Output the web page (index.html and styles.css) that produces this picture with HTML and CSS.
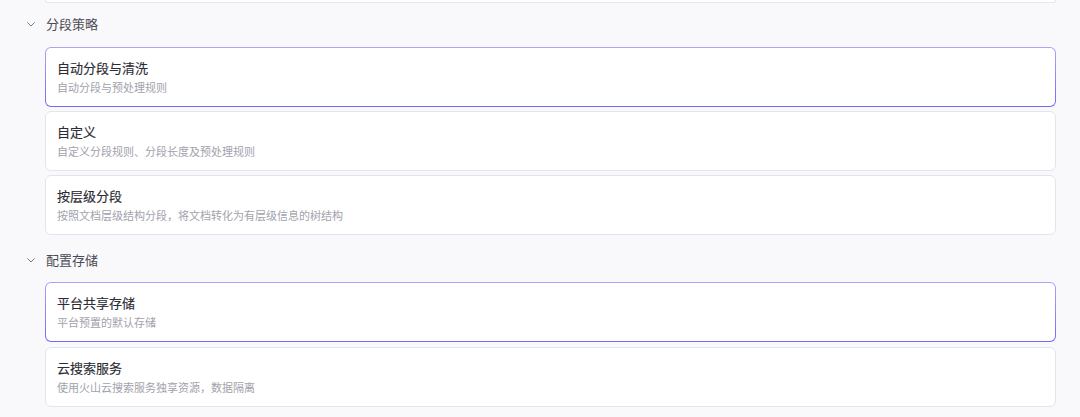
FILE: index.html
```html
<!DOCTYPE html>
<html lang="zh-CN">
<head>
<meta charset="utf-8">
<title>分段策略</title>
<link rel="stylesheet" href="styles.css">
</head>
<body>
<div class="page">
  <div class="prev-card"></div>

  <section class="group group-first">
    <div class="group-header">
      <svg class="chevron" width="8" height="5" viewBox="0 0 8 5" aria-hidden="true"><path d="M0.6 0.6 L4 4 L7.4 0.6" fill="none" stroke="#7e7e88" stroke-width="1" stroke-linecap="round" stroke-linejoin="round"/></svg>
      <span class="group-title">分段策略</span>
    </div>
    <div class="options">
      <div class="option selected">
        <div class="option-title">自动分段与清洗</div>
        <div class="option-desc">自动分段与预处理规则</div>
      </div>
      <div class="option">
        <div class="option-title">自定义</div>
        <div class="option-desc">自定义分段规则、分段长度及预处理规则</div>
      </div>
      <div class="option">
        <div class="option-title">按层级分段</div>
        <div class="option-desc">按照文档层级结构分段，将文档转化为有层级信息的树结构</div>
      </div>
    </div>
  </section>

  <section class="group group-second">
    <div class="group-header">
      <svg class="chevron" width="8" height="5" viewBox="0 0 8 5" aria-hidden="true"><path d="M0.6 0.6 L4 4 L7.4 0.6" fill="none" stroke="#7e7e88" stroke-width="1" stroke-linecap="round" stroke-linejoin="round"/></svg>
      <span class="group-title">配置存储</span>
    </div>
    <div class="options">
      <div class="option selected">
        <div class="option-title">平台共享存储</div>
        <div class="option-desc">平台预置的默认存储</div>
      </div>
      <div class="option">
        <div class="option-title">云搜索服务</div>
        <div class="option-desc">使用火山云搜索服务独享资源，数据隔离</div>
      </div>
    </div>
  </section>
</div>
</body>
</html>
```

FILE: styles.css
```css
* { box-sizing: border-box; }

html, body {
  margin: 0;
  padding: 0;
  background: #f9f9fb;
}

body {
  font-family: "Noto Sans CJK SC", "Noto Sans", "Liberation Sans", sans-serif;
  height: 417px;
  overflow: hidden;
}

.page {
  padding: 0 24px 0 45px;
}

.prev-card {
  height: 3px;
  background: #fff;
  border: 1px solid #e6e6ee;
  border-top: none;
  border-radius: 0 0 6px 6px;
}

.group-first {
  padding-top: 11px;
}

.group-second {
  padding-top: 15px;
}

.group-header {
  display: flex;
  align-items: center;
  gap: 11px;
  height: 20px;
  margin-left: -18px;
  margin-bottom: 13px;
}

.group-second .group-header {
  margin-bottom: 12px;
}

.chevron {
  display: block;
  flex: none;
}

.group-title {
  font-size: 13px;
  line-height: 20px;
  color: #4b4b55;
}

.options {
  display: flex;
  flex-direction: column;
  gap: 4px;
}

.group-second .options {
  gap: 5px;
}

.option {
  height: 60px;
  padding: 10px 11px;
  background: #fff;
  border: 1px solid #e4e4ec;
  border-radius: 6px;
}

.option.selected {
  border: 1px solid transparent;
  background:
    linear-gradient(#fff, #fff) padding-box,
    linear-gradient(to bottom, #aaa5fa, #716af5) border-box;
}

.option-title {
  font-size: 13px;
  line-height: 20px;
  font-weight: 400;
  color: #2c2c34;
  -webkit-text-stroke: 0.15px #2c2c34;
}

.option-desc {
  font-size: 11px;
  line-height: 18px;
  color: #a2a2ac;
}
```
